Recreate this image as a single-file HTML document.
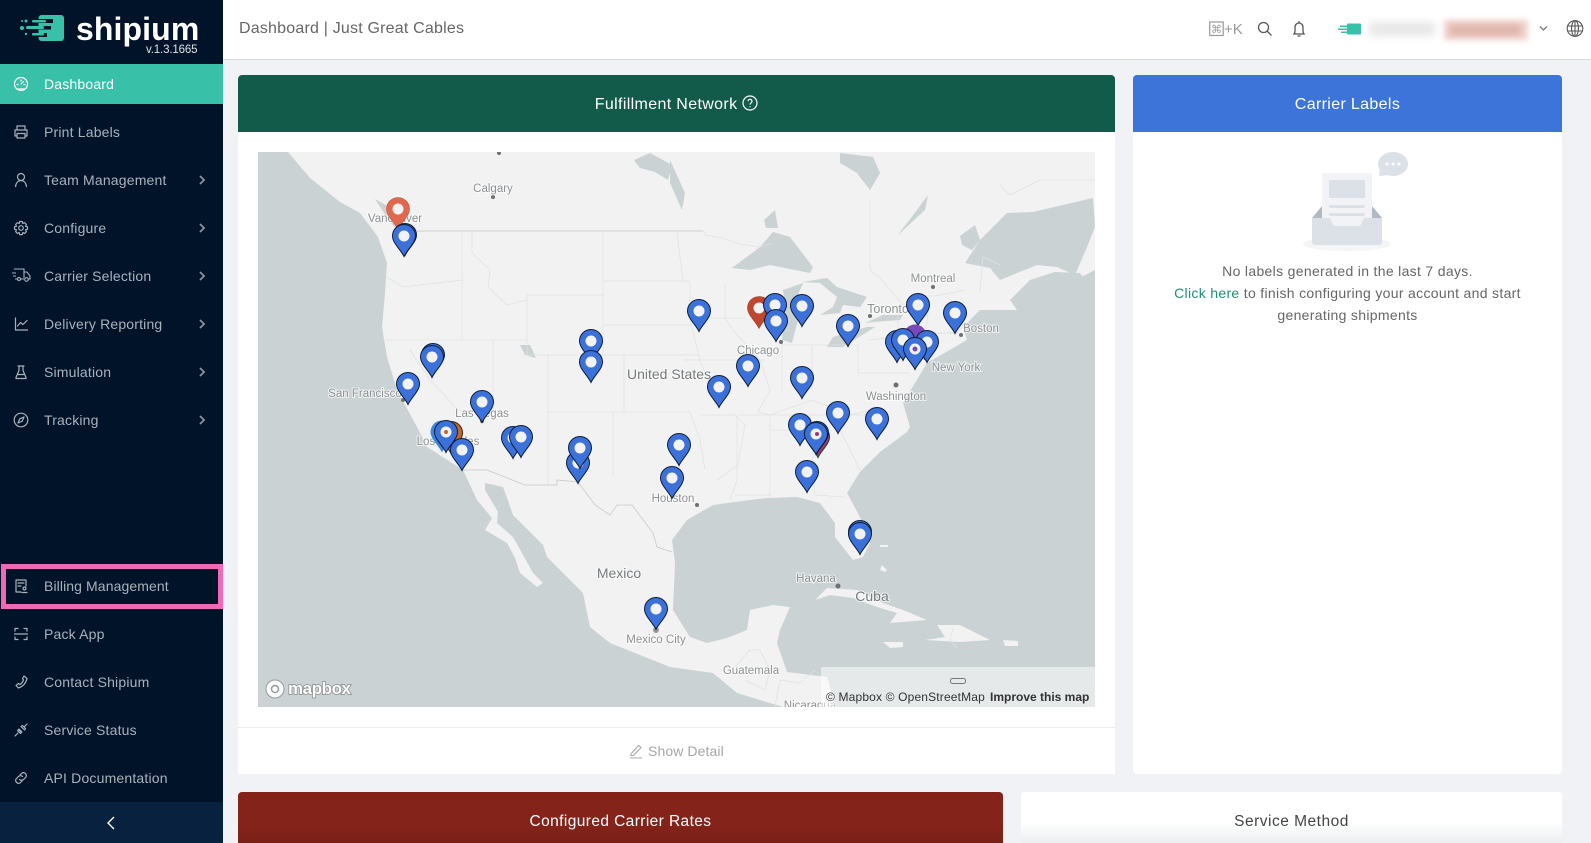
<!DOCTYPE html>
<html><head><meta charset="utf-8"><title>Dashboard</title>
<style>
html,body{margin:0;padding:0;width:1591px;height:843px;overflow:hidden;background:#f0f2f6;font-family:"Liberation Sans",sans-serif}
.a{position:absolute}
#side{left:0;top:0;width:223px;height:843px;background:#011329}
.it{position:absolute;left:44px;font-size:14px;letter-spacing:.18px;color:#a9b2bc;line-height:20px;white-space:nowrap}
.ic{position:absolute;left:13px;width:16px;height:16px;fill:none;stroke:#a9b2bc;stroke-width:1.2;stroke-linecap:round;stroke-linejoin:round}
.ch{position:absolute;left:198px;width:8px;height:10px;fill:none;stroke:#8b95a1;stroke-width:1.8}
.hd{position:absolute;color:#fff;font-size:16px;letter-spacing:.35px;text-align:center}
svg text{font-family:"Liberation Sans",sans-serif}
.l{font-size:11.5px;fill:#8d9193;stroke:#fff;stroke-opacity:.7;stroke-width:2px;paint-order:stroke;text-anchor:middle}
.L{font-size:14px;fill:#75797b;stroke:#fff;stroke-opacity:.7;stroke-width:2px;paint-order:stroke;text-anchor:middle}
</style></head><body>
<div class="a" id="side">
<svg class="a" style="left:18px;top:13px" width="50" height="30" viewBox="0 0 50 30">
<rect x="20.500" y="2" width="25.500" height="26" rx="3" fill="#38c0a8"/>
<g fill="#011329"><rect x="20" y="6" width="15" height="4"/><rect x="20" y="13" width="13" height="3.500"/><rect x="20" y="20" width="9" height="4"/></g>
<g fill="#38c0a8"><rect x="14" y="7" width="14" height="2.500" rx="1"/><rect x="8" y="13" width="18" height="3" rx="1.500"/><rect x="14" y="20" width="12" height="2.500" rx="1"/><circle cx="8" cy="8" r="1.500"/><circle cx="4" cy="8" r="1"/><circle cx="4" cy="15" r="2"/><circle cx="8" cy="21" r="1.200"/></g>
</svg>
<div class="a" style="left:76px;top:9px;font-size:32px;font-weight:700;color:#fff;line-height:40px;letter-spacing:.1px">shipium</div>
<div class="a" style="left:146px;top:43px;font-size:11.5px;color:#dfe3e7;line-height:14px;letter-spacing:-.15px">v.1.3.1665</div>
<div class="a" style="left:0;top:64px;width:223px;height:40px;background:#38c0a8"></div>
<div class="it" style="top:74px;color:#fff">Dashboard</div>
<svg class="ic" style="top:76px;stroke:#fff" viewBox="0 0 16 16"><circle cx="8" cy="8" r="6.500"/><path d="M8 8l2.500-2.500M4 8.500h1M11 8.500h1M8 4v1M5 13h6"/></svg>
<div class="it" style="top:122px">Print Labels</div>
<svg class="ic" style="top:124px" viewBox="0 0 16 16"><path d="M4 5V2h8v3M4 12H2V6h12v6h-2M4 9.500h8V14H4z"/></svg>
<div class="it" style="top:170px">Team Management</div>
<svg class="ic" style="top:172px" viewBox="0 0 16 16"><circle cx="8" cy="5" r="3.500"/><path d="M2.500 14.500c.5-3.500 2.500-6 5.500-6s5 2.500 5.500 6"/></svg>
<svg class="ch" style="top:175px" viewBox="0 0 8 10"><path d="M2 1l4 4-4 4"/></svg>
<div class="it" style="top:218px">Configure</div>
<svg class="ic" style="top:220px" viewBox="0 0 16 16"><circle cx="8" cy="8" r="2.300"/><path d="M6.700 1.500h2.600l.4 2 1.900-.8 1.800 1.800-.9 1.800 2 .5v2.500l-2 .5.900 1.800-1.800 1.800-1.900-.8-.4 2H6.700l-.4-2-1.900.8-1.800-1.800.9-1.800-2-.5V6.800l2-.5-.9-1.800 1.800-1.800 1.900.8z"/></svg>
<svg class="ch" style="top:223px" viewBox="0 0 8 10"><path d="M2 1l4 4-4 4"/></svg>
<div class="it" style="top:266px">Carrier Selection</div>
<svg class="a" style="left:11px;top:267px;fill:none;stroke:#a9b2bc;stroke-width:1.100" width="21" height="16" viewBox="0 0 21 16"><path d="M3 2h10v9M1 6h4M2 9h3M4 12h2M10 12h3M13 5h3l3 4v3h-2"/><circle cx="8" cy="12" r="1.500"/><circle cx="15.500" cy="12.500" r="1.800"/></svg>
<svg class="ch" style="top:271px" viewBox="0 0 8 10"><path d="M2 1l4 4-4 4"/></svg>
<div class="it" style="top:314px">Delivery Reporting</div>
<svg class="ic" style="top:316px" viewBox="0 0 16 16"><path d="M2.500 2v12h12M4.500 10l3-3.500 2.500 2 4-4"/></svg>
<svg class="ch" style="top:319px" viewBox="0 0 8 10"><path d="M2 1l4 4-4 4"/></svg>
<div class="it" style="top:362px">Simulation</div>
<svg class="ic" style="top:364px" viewBox="0 0 16 16"><path d="M5 2h6M6 2v4.500L3 13.500V14.500h10V13.500L10 6.500V2M4.500 10.500h7"/></svg>
<svg class="ch" style="top:367px" viewBox="0 0 8 10"><path d="M2 1l4 4-4 4"/></svg>
<div class="it" style="top:410px">Tracking</div>
<svg class="ic" style="top:412px" viewBox="0 0 16 16"><circle cx="8" cy="8" r="6.800"/><path d="M11 5L9.200 9.200 5 11l1.800-4.200z"/></svg>
<svg class="ch" style="top:415px" viewBox="0 0 8 10"><path d="M2 1l4 4-4 4"/></svg>
<div class="a" style="left:1px;top:564px;width:222px;height:45px;box-sizing:border-box;border:5px solid #f069b6"></div>
<div class="it" style="top:576px;letter-spacing:.1px">Billing Management</div>
<svg class="ic" style="top:578px" viewBox="0 0 16 16"><path d="M13 8V2H3v12h5M5 5h6M5 8h3"/><circle cx="11.500" cy="10.500" r="1.500"/><path d="M9 14.500h5"/></svg>
<div class="it" style="top:624px">Pack App</div>
<svg class="ic" style="top:626px" viewBox="0 0 16 16"><path d="M2 5V2.500h3M11 2.500h3V5M2 11v2.500h3M11 13.500h3V11M1.500 8h13"/></svg>
<div class="it" style="top:672px">Contact Shipium</div>
<svg class="ic" style="top:674px" viewBox="0 0 16 16"><path d="M11 2l3 2.500c-1 4.500-4 8-8.500 9.500L3 11.500l2.500-2 1.500 1c1.500-1 3-3 3.500-4.500L9.500 4.500z"/></svg>
<div class="it" style="top:720px">Service Status</div>
<svg class="ic" style="top:722px" viewBox="0 0 16 16"><path d="M2 14l3-3M14 2l-3 3M6 7l3 3M4.500 8.500l3 3 1-1-3-3zM8 4.500l3.500 3.500 1-1.500L9.500 3.500z"/></svg>
<div class="it" style="top:768px">API Documentation</div>
<svg class="ic" style="top:770px" viewBox="0 0 16 16"><path d="M7 5l2-2a3 3 0 0 1 4 4l-2.500 2.500a3 3 0 0 1-4 0M9 11l-2 2a3 3 0 0 1-4-4l2.500-2.500a3 3 0 0 1 4 0"/></svg>
<div class="a" style="left:0;top:802px;width:223px;height:41px;background:#08213f"></div>
<svg class="a" style="left:105px;top:815px;fill:none;stroke:#fff;stroke-width:1.400" width="12" height="16" viewBox="0 0 12 16"><path d="M9 2L3 8l6 6"/></svg>
</div>

<div class="a" style="left:223px;top:0;width:1368px;height:59px;background:#fff;border-bottom:1px solid #dcdcdc"></div>
<div class="a" style="left:239px;top:19px;font-size:16px;letter-spacing:.2px;color:#666;line-height:20px;white-space:nowrap">Dashboard | Just Great Cables</div>
<svg class="a" style="left:1209px;top:20px" width="382" height="18" viewBox="0 0 382 18">
<rect x=".7" y="2" width="13.500" height="13.500" fill="none" stroke="#999" stroke-width="1.200"/>
<text x="7.500" y="13" font-size="11" fill="#999" text-anchor="middle">⌘</text>
<text x="15" y="14" font-size="15" fill="#999">+K</text>
<g fill="none" stroke="#555" stroke-width="1.300"><circle cx="54.500" cy="7.500" r="5"/><path d="M58 11l4.500 4.500"/>
<path d="M85 14c1.500-2 1-3 1-6.500 0-3 2-4.500 4-4.500s4 1.500 4 4.500c0 3.500-.5 4.500 1 6.500zM90 1v2M88.500 16h3"/>
<path d="M331 6.500l3.500 3.500 3.500-3.500" stroke="#777"/></g>
<g fill="#38c0a8"><rect x="138" y="3.500" width="14" height="11" rx="1"/><rect x="131" y="5.500" width="8" height="1.500"/><rect x="129" y="8.500" width="10" height="1.500"/><rect x="132" y="11.500" width="7" height="1.500"/></g>
<g fill="none" stroke="#555" stroke-width="1.100"><circle cx="366" cy="8.500" r="7.800"/><ellipse cx="366" cy="8.500" rx="3.500" ry="7.800"/><path d="M358.500 6h15M358.500 11h15M366 .7v15.600"/></g>
</svg>
<div class="a" style="left:1369px;top:22px;width:66px;height:14px;background:#e2e2e2;filter:blur(4px);opacity:.8"></div>
<div class="a" style="left:1444px;top:20px;width:84px;height:20px;background:#efd2ca;filter:blur(3px)"></div>
<div class="a" style="left:1450px;top:25px;width:70px;height:10px;background:#e0b5aa;filter:blur(3px)"></div>

<div class="a" style="left:238px;top:75px;width:877px;height:699px;background:#fff"></div>
<div class="a hd" style="left:238px;top:75px;width:877px;height:57px;line-height:59px;background:#125a4a;border-radius:4px 4px 0 0">Fulfillment Network <svg style="vertical-align:-2px" width="16" height="16" viewBox="0 0 16 16" fill="none" stroke="#fff" stroke-width="1.200"><circle cx="8" cy="8" r="7"/><path d="M6 6.200a2 2 0 1 1 3 1.800c-.7.400-1 .8-1 1.600M8 11.200v1"/></svg></div>

<svg class="a" style="left:0;top:0" width="1591" height="843" viewBox="0 0 1591 843">
<defs>
<clipPath id="m"><rect x="258" y="152" width="837" height="555"/></clipPath>
<path id="d" d="M0 20.500C-3 14-11.500 7-11.500 0A11.500 11.500 0 1 1 11.500 0C11.500 7 3 14 0 20.500Z"/>
<g id="b"><use href="#d" fill="#3b71d9" stroke="#0c1d38" stroke-width="1"/><circle r="5.500" fill="#f2f2f2"/></g>
</defs>
<g clip-path="url(#m)">
<rect x="258" y="152" width="837" height="555" fill="#cad2d3"/>
<path fill="#f2f2f2" d="M288 152H1095V270L1070 283 1030 290 1017 310 980 310 963 327 967 340 927 363 903 403 910 427 907 432 880 452 860 472 847 493 860 517 870 543 863 557 853 560 835 537 835 523 820 503 797 497 767 498 750 500 713 505 687 520 672 540 675 563 673 610 690 637 707 643 727 638 747 630 750 610 773 605 790 607 780 630 777 643 787 672 827 677 830 687 835 707 783 707 737 693 713 673 670 667 610 643 590 627 583 593 547 557 543 545 513 515 503 487 485 483 485 490 498 512 497 523 513 537 522 553 533 573 543 583 537 587 520 573 515 558 507 543 485 530 492 518 477 500 463 470 427 447 417 427 397 390 387 357 382 327 385 293 387 263 378 237 360 213 340 202 310 178Z"/>
<g fill="#cad2d3">
<path d="M965 263L980 240 1007 213 1033 212 1093 198 1095 227 1087 247 1075 275 1057 267 1037 265 1017 273 1000 280 990 268Z"/>
<path d="M1017 310L1035 297 1060 287 1085 280 1080 273 1055 272 1030 280 1010 300Z"/>
<path d="M732 268L760 247 773 232 790 237 813 267 810 273 770 265 750 270Z"/>
<path d="M782 340L792 343 798 320 802 307 797 297 803 283 783 290 785 307Z"/>
<path d="M803 282L827 278 837 287 867 297 860 307 843 305 840 313 820 315 833 307 837 297 820 283Z"/>
<path d="M827 347L843 347 875 327 867 327 833 337Z"/>
<path d="M865 323L883 315 903 315 900 320 873 322Z"/>
<path d="M840 153L873 157 880 173 870 190 857 173 840 163Z"/>
<path d="M670 160L685 193 682 210 670 183Z"/>
<path d="M634 160L650 153 672 165 668 180 655 172 640 168Z"/>
<path d="M764 220L775 210 778 228 766 228Z"/>
<path d="M898 235L910 218 902 230 928 195 925 210 912 222Z"/>
<path d="M375 199L395 210 405 220 415 238 405 238 390 222Z"/>
<path d="M520 345L530 345 536 358 525 355Z"/>
<path d="M960 236L975 225 980 240 972 250 962 245Z"/>
</g>
<g fill="#f2f2f2">
<path d="M815 600L827 588 857 590 883 603 903 610 927 620 890 623 897 613 877 607 853 598 830 595Z"/>
<path d="M937 625L960 625 990 640 960 642 925 640 945 637Z"/>
<path d="M883 642L903 642 903 647 890 648Z"/>
<path d="M1003 640L1018 641 1018 646 1005 646Z"/>
<path d="M882 565L887 570 885 572 880 570ZM880 545h8v2h-8z"/>
</g>
<g fill="none" stroke="#e0e2e2" stroke-width=".8">
<path d="M417 231H703L706 235 722 238 740 244 760 247 772 243M462 232V340M387 277L403 287 463 280M472 232V253L490 270 488 287 507 305 527 300M603 232V355M527 295H603M527 295V355H603M383 340H527M493 340V412L458 410 430 380 410 350M548 355V485M548 412H624M624 355V412M548 412H613V477M603 281H690M603 325H692M603 355H700M624 412H690L700 440 705 470M677 232L683 282M690 282V320L700 360 710 385 715 405M690 318H745M683 360H765M725 283V318L733 330 760 360 770 390 758 412 770 415M782 343V393M812 345V390M782 345H858V373H910M867 340L957 332 963 327M905 305L898 305V335M930 300L925 333H958M770 415L812 400 850 415 880 408M740 415H880M737 415V480L730 500M770 415V497M810 415L815 495 845 497M735 495H770M770 430H810M840 430L860 470M700 415H735L745 425 738 465 717 480"/>
<path d="M903 305L880 278 870 270 870 200M965 290L935 296 925 296M1000 265L983 257 980 292M1000 185L1010 195 1040 180H1095" />
<path stroke="#c6c9ca" d="M463 470H487L525 485H557V480L578 482 595 505 610 515 617 505 632 505 653 533 657 547 672 552M417 231H703"/>
<path d="M735 667L750 650 760 650 770 670 765 690 745 680M775 707L780 680 800 683 815 670"/>
<path d="M953 628L950 640 957 648"/>
</g>
<g fill="#6d7173"><circle cx="499" cy="153" r="2"/><circle cx="493" cy="197" r="2"/><circle cx="403" cy="400" r="2"/><circle cx="697" cy="505" r="2"/><circle cx="781" cy="342" r="2"/><circle cx="870" cy="316" r="2"/><circle cx="933" cy="287" r="2"/><circle cx="961" cy="335" r="2"/><circle cx="926" cy="358" r="2.500"/><circle cx="896" cy="385" r="2.500"/><circle cx="838" cy="586" r="2.500"/><circle cx="656" cy="630" r="3" fill="#999"/><circle cx="482" cy="421" r="2"/></g>
<g class="t">
<text class="l" x="493" y="192">Calgary</text><text class="l" x="395" y="222">Vancouver</text><text class="l" x="365" y="397">San Francisco</text><text class="l" x="482" y="417">Las Vegas</text>
<text class="L" x="669" y="379">United States</text><text class="l" x="448" y="445">Los Angeles</text><text class="l" x="673" y="502">Houston</text><text class="L" x="619" y="578">Mexico</text>
<text class="l" x="656" y="643">Mexico City</text><text class="l" x="816" y="582">Havana</text><text class="L" x="872" y="601">Cuba</text><text class="l" x="751" y="674">Guatemala</text><text class="l" x="810" y="709">Nicaragua</text>
<text class="l" x="758" y="354">Chicago</text><text class="l" x="888" y="313" style="font-size:12.500px">Toronto</text><text class="l" x="933" y="282">Montreal</text><text class="l" x="981" y="332">Boston</text><text class="l" x="956" y="371">New York</text><text class="l" x="896" y="400">Washington</text>
</g>
<g>
<g transform="translate(398 209)"><use href="#d" fill="#e2674f" stroke="#b9543f" stroke-width=".6"/><circle r="5.500" fill="#f2f2f2"/></g>
<use href="#b" x="405" y="235"/><use href="#b" x="404" y="236"/>
<use href="#b" x="591" y="341"/><use href="#b" x="591" y="362"/>
<use href="#b" x="433" y="355"/><use href="#b" x="432" y="357"/>
<use href="#b" x="408" y="384"/><use href="#b" x="482" y="402"/>
<g transform="translate(451 433)"><use href="#d" fill="#c4662a" stroke="#3a2410"/></g>
<g transform="translate(442 432)"><use href="#d" fill="#3d86dc"/></g>
<use href="#b" x="446" y="432"/><circle cx="446" cy="432" r="2" fill="#c4662a"/>
<use href="#b" x="462" y="450"/><use href="#b" x="513" y="438"/><use href="#b" x="521" y="437"/>
<use href="#b" x="578" y="463"/><use href="#b" x="580" y="448"/>
<use href="#b" x="679" y="445"/><use href="#b" x="672" y="478"/><use href="#b" x="656" y="609"/>
<use href="#b" x="699" y="311"/><use href="#b" x="719" y="387"/><use href="#b" x="748" y="366"/>
<g transform="translate(759 308)"><use href="#d" fill="#c0472f" stroke="#a33b27" stroke-width=".6"/><circle r="5.500" fill="#f2f2f2"/></g>
<use href="#b" x="775" y="305"/><use href="#b" x="776" y="321"/><use href="#b" x="802" y="306"/><use href="#b" x="802" y="378"/>
<use href="#b" x="848" y="326"/><use href="#b" x="918" y="305"/><use href="#b" x="955" y="313"/>
<g transform="translate(915 336)"><use href="#d" fill="#7a48b8"/></g>
<use href="#b" x="897" y="342"/><use href="#b" x="903" y="340"/><use href="#b" x="927" y="342"/><use href="#b" x="915" y="349"/>
<circle cx="915" cy="349" r="2.500" fill="#7a48b8"/>
<use href="#b" x="838" y="413"/><use href="#b" x="877" y="419"/><use href="#b" x="800" y="425"/>
<g transform="translate(818 437)"><use href="#d" fill="#a13a6a" stroke="#143"/></g>
<use href="#b" x="817" y="433"/><use href="#b" x="816" y="434"/><circle cx="817" cy="434" r="2" fill="#a13a6a"/>
<use href="#b" x="807" y="472"/><use href="#b" x="860" y="532"/><use href="#b" x="860" y="534"/>
</g>
<rect x="821" y="667" width="274" height="40" fill="#fff" fill-opacity=".5"/>
<rect x="950.500" y="678.500" width="15" height="5" rx="2" fill="none" stroke="#777" stroke-width="1"/>
<text x="826" y="701" font-size="12" letter-spacing=".16" fill="#333">© Mapbox © OpenStreetMap</text>
<text x="990" y="701" font-size="12" font-weight="700" fill="#333">Improve this map</text>
<circle cx="275" cy="689" r="9" fill="#fff" fill-opacity=".9" stroke="#999" stroke-width="1"/>
<circle cx="275" cy="689" r="3.500" fill="none" stroke="#999" stroke-width="1.500"/>
<text x="288" y="694" font-size="17" font-weight="700" fill="#fff" stroke="#8a8a8a" stroke-width="1.500" paint-order="stroke" textLength="63">mapbox</text>
</g>
</svg>

<div class="a" style="left:238px;top:727px;width:877px;height:1px;background:#ececec"></div>
<svg class="a" style="left:629px;top:743px;fill:none;stroke:#a8a8a8;stroke-width:1.100" width="14" height="16" viewBox="0 0 14 16"><path d="M2 11L9.500 2.500l2.500 2L4.500 12.500H2zM1 15h12"/></svg>
<div class="a" style="left:648px;top:741px;font-size:14px;letter-spacing:.1px;color:#a6a6a6;line-height:20px;white-space:nowrap">Show Detail</div>

<div class="a" style="left:1133px;top:75px;width:429px;height:699px;background:#fff;border-radius:4px"></div>
<div class="a hd" style="left:1133px;top:75px;width:429px;height:57px;line-height:59px;background:#3c74d9;border-radius:4px 4px 0 0">Carrier Labels</div>
<svg class="a" style="left:1290px;top:145px" width="130" height="110" viewBox="1290 145 130 110">
<ellipse cx="1347" cy="244" rx="44" ry="7" fill="#f5f5f6"/>
<path d="M1312 218L1322 206H1372L1382 218Z" fill="#b0bac3"/>
<rect x="1322" y="173" width="50" height="60" rx="2" fill="#f2f3f6"/>
<rect x="1329" y="180" width="36" height="18" fill="#dce0e7"/>
<rect x="1329" y="205" width="36" height="3" rx="1.500" fill="#dce0e7"/>
<rect x="1329" y="213" width="36" height="3" rx="1.500" fill="#dce0e7"/>
<path d="M1312 218H1329C1332 218 1331 226 1336 226H1358C1363 226 1362 218 1365 218H1382V242a3 3 0 0 1-3 3H1315a3 3 0 0 1-3-3Z" fill="#dce0e7"/>
<ellipse cx="1393" cy="164" rx="15" ry="12" fill="#dce0e7"/><path d="M1380 168L1379 176 1389 175Z" fill="#dce0e7"/>
<g fill="#fff"><circle cx="1387" cy="164" r="1.500"/><circle cx="1393" cy="164" r="1.500"/><circle cx="1399" cy="164" r="1.500"/></g>
</svg>
<div class="a" style="left:1133px;top:260px;width:429px;text-align:center;font-size:14px;letter-spacing:.32px;line-height:22px;color:#666">No labels generated in the last 7 days.<br><span style="color:#1f8f75">Click here</span> to finish configuring your account and start<br>generating shipments</div>

<div class="a" style="left:238px;top:792px;width:765px;height:51px;background:linear-gradient(#84231a 60%,#7b2017);border-radius:4px 4px 0 0"></div>
<div class="a hd" style="left:238px;top:812px;width:765px;line-height:20px;font-size:15.500px;letter-spacing:.4px">Configured Carrier Rates</div>
<div class="a" style="left:1021px;top:792px;width:541px;height:51px;background:linear-gradient(#fff 60%,#eceef0);border-radius:4px 4px 0 0"></div>
<div class="a hd" style="left:1021px;top:812px;width:541px;line-height:20px;font-size:15.500px;letter-spacing:.5px;color:#444">Service Method</div>
</body></html>
